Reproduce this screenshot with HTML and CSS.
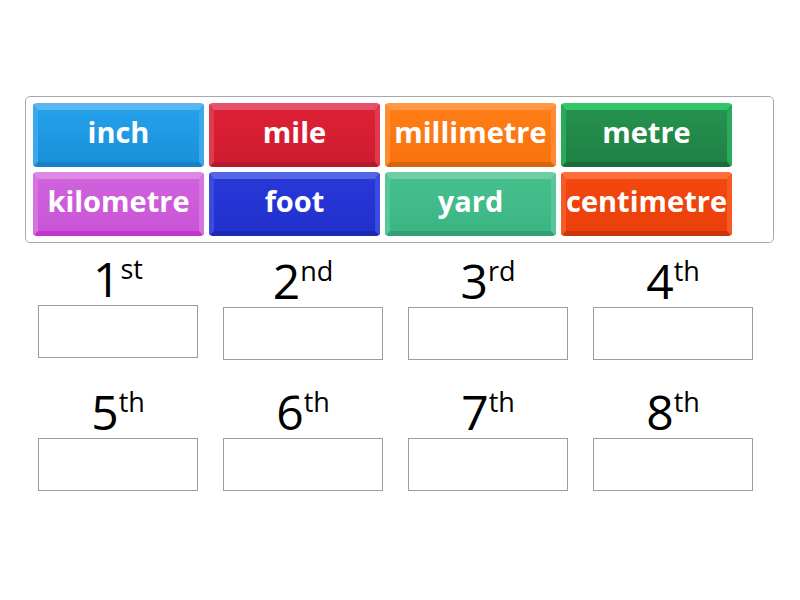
FILE: index.html
```html
<!DOCTYPE html>
<html lang="en">
<head>
<meta charset="utf-8">
<title>Rank order</title>
<link rel="stylesheet" href="styles.css">
</head>
<body>
<div class="page">
  <div class="bank">
    <div class="tile tile--blue">inch</div>
    <div class="tile tile--red">mile</div>
    <div class="tile tile--orange">millimetre</div>
    <div class="tile tile--green">metre</div>
    <div class="tile tile--purple">kilometre</div>
    <div class="tile tile--navy">foot</div>
    <div class="tile tile--mint">yard</div>
    <div class="tile tile--vermilion">centimetre</div>
  </div>
  <div class="slots">
    <div class="slot slot--raised"><div class="label">1<sup>st</sup></div><div class="box"></div></div>
    <div class="slot"><div class="label">2<sup>nd</sup></div><div class="box"></div></div>
    <div class="slot"><div class="label">3<sup>rd</sup></div><div class="box"></div></div>
    <div class="slot"><div class="label">4<sup>th</sup></div><div class="box"></div></div>
    <div class="slot"><div class="label">5<sup>th</sup></div><div class="box"></div></div>
    <div class="slot"><div class="label">6<sup>th</sup></div><div class="box"></div></div>
    <div class="slot"><div class="label">7<sup>th</sup></div><div class="box"></div></div>
    <div class="slot"><div class="label">8<sup>th</sup></div><div class="box"></div></div>
  </div>
</div>
</body>
</html>
```

FILE: styles.css
```css
html, body {
  margin: 0;
  padding: 0;
  background: #ffffff;
}

body {
  font-family: "Open Sans", "Liberation Sans", sans-serif;
  width: 800px;
  height: 600px;
  overflow: hidden;
}

.page {
  padding: 96px 0 0 25px;
}

.bank {
  box-sizing: border-box;
  width: 749px;
  border: 1px solid #a8a8a8;
  border-radius: 5px;
  padding: 6px 7px;
  display: grid;
  grid-template-columns: repeat(4, 171px);
  grid-auto-rows: 64px;
  gap: 5px;
}

.tile {
  box-sizing: border-box;
  display: flex;
  align-items: center;
  justify-content: center;
  border-radius: 4px;
  border-style: solid;
  border-width: 7px 5px 5px 5px;
  padding-bottom: 9px;
  color: #ffffff;
  font-weight: 700;
  font-size: 29px;
  line-height: 40px;
  white-space: nowrap;
  overflow: visible;
}

.tile--blue {
  background: linear-gradient(#23a1ea, #1a90da);
  border-color: #5ab7ef #3aa8ea #1582c6 #3aa8ea;
}
.tile--red {
  background: linear-gradient(#dd2036, #cf1c30);
  border-color: #e6526a #e03a4e #b5192b #e03a4e;
}
.tile--orange {
  background: linear-gradient(#ff7d16, #f8730e);
  border-color: #ff9847 #ff8a30 #da6408 #ff8a30;
}
.tile--green {
  background: linear-gradient(#26924f, #1f8144);
  border-color: #2fc767 #29a95a #1a6d3a #29a95a;
}
.tile--purple {
  background: linear-gradient(#d062dc, #c955d6);
  border-color: #dd8ae5 #d574df #c136cf #d574df;
}
.tile--navy {
  background: linear-gradient(#2738d8, #2231cc);
  border-color: #5665e3 #3b4bdd #1b29b3 #3b4bdd;
}
.tile--mint {
  background: linear-gradient(#44c08d, #3cb584);
  border-color: #6fcea6 #57c698 #31a072 #57c698;
}
.tile--vermilion {
  background: linear-gradient(#f4470f, #ea3f0a);
  border-color: #fc6e3c #f85a24 #cb3508 #f85a24;
}

.slots {
  display: grid;
  grid-template-columns: repeat(4, 160px);
  column-gap: 25px;
  row-gap: 28px;
  margin: 14px 0 0 13px;
}

.slot {
  display: flex;
  flex-direction: column;
  align-items: center;
}

.slot--raised {
  margin-top: -2px;
}

.label {
  font-size: 48px;
  line-height: 48px;
  height: 48px;
  color: #000000;
  font-weight: 400;
  white-space: nowrap;
}

.label sup {
  font-size: 27px;
  line-height: 0;
  vertical-align: 18px;
}

.box {
  box-sizing: border-box;
  width: 160px;
  height: 53px;
  margin-top: 2px;
  border: 1px solid #9c9c9c;
  background: #ffffff;
}
```
